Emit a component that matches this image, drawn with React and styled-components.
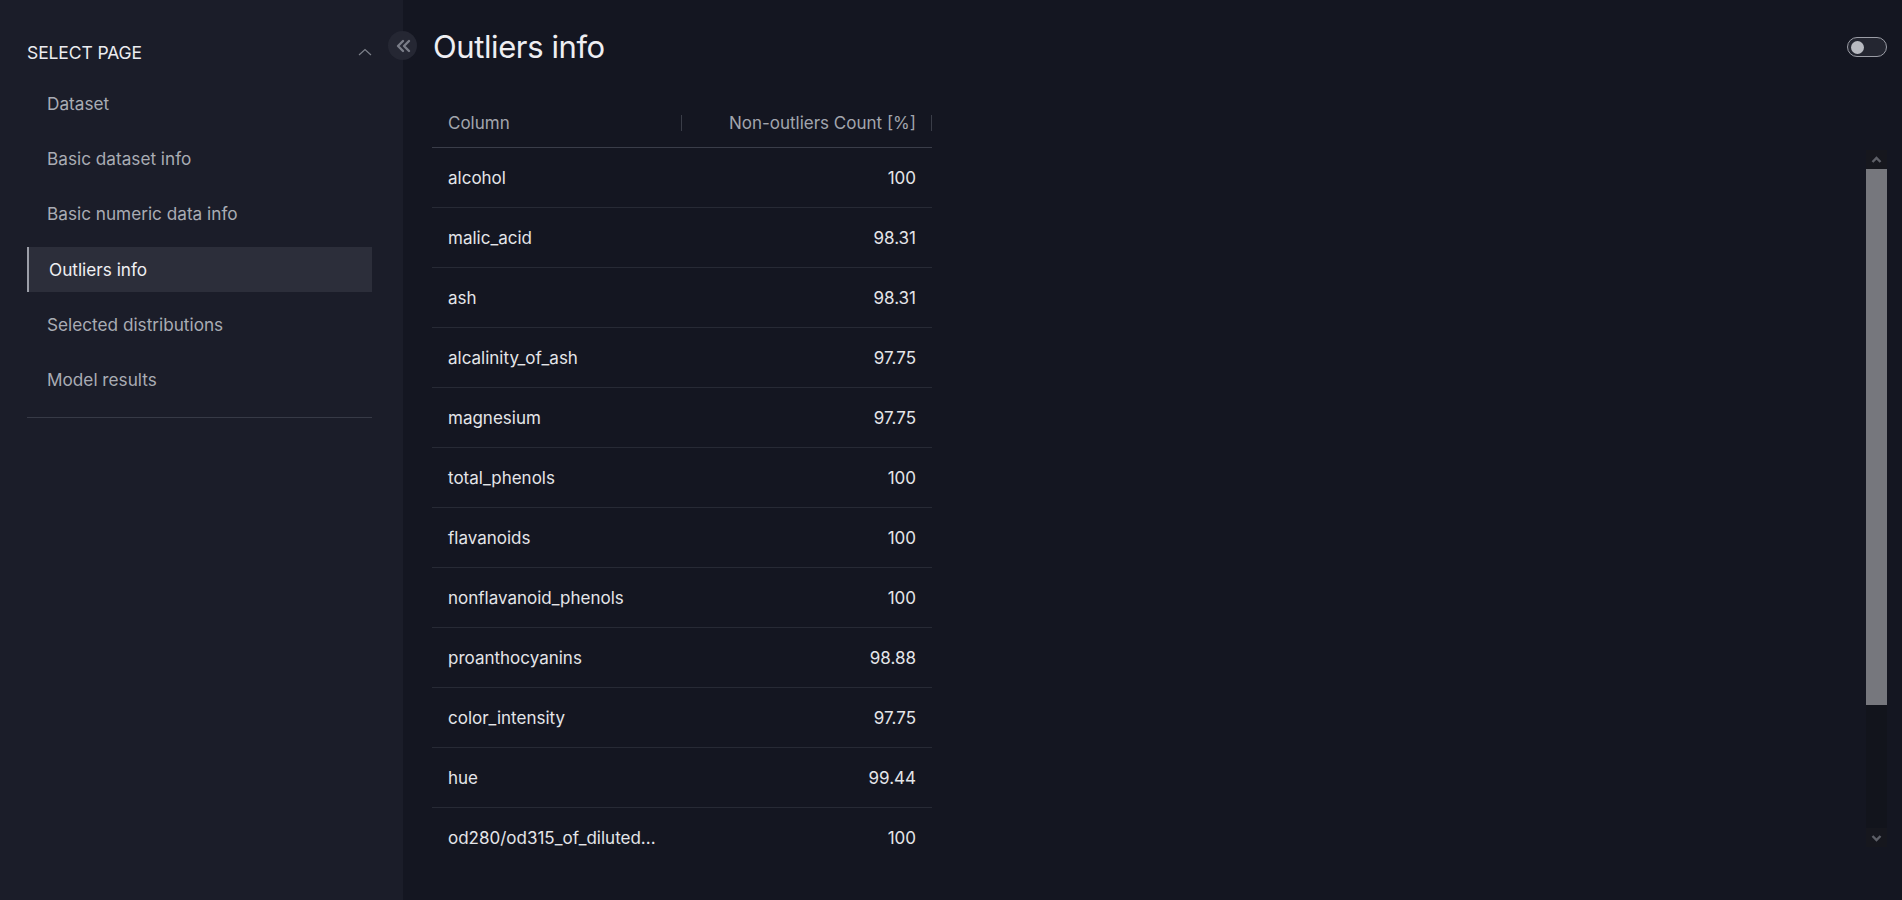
import React from 'react'
import styled, { createGlobalStyle } from 'styled-components';

const GlobalStyle = createGlobalStyle`
  body {
    margin: 0;
    background: #141621;
    font-family: Inter, "Noto Sans", "Liberation Sans", sans-serif;
  }
`;

const Page = styled.div`
  display: flex;
  height: 100vh;
  overflow: hidden;
`;

const Sidebar = styled.aside`
  position: relative;
  width: 403px;
  flex-shrink: 0;
  box-sizing: border-box;
  padding: 40px 31px 0 27px;
  background: #1b1d29;
`;

const SectionHeader = styled.div`
  display: flex;
  align-items: center;
  justify-content: space-between;
  height: 24px;
  color: #ececf0;
  font-size: 17.5px;
  letter-spacing: -0.1px;
`;

const NavList = styled.nav`
  display: flex;
  flex-direction: column;
  gap: 10.2px;
  margin-top: 17px;
  padding-bottom: 15px;
  border-bottom: 1px solid #373a46;
`;

const NavItem = styled.div`
  display: flex;
  align-items: center;
  height: 45px;
  padding-left: 20px;
  border-left: 2px solid ${({ $active }) => ($active ? '#9c9ea8' : 'transparent')};
  margin-left: ${({ $active }) => ($active ? '0' : '-2px')};
  background: ${({ $active }) => ($active ? '#2c2e3a' : 'transparent')};
  color: ${({ $active }) => ($active ? '#f0f0f3' : '#a9acb4')};
  font-size: 17.2px;
  cursor: pointer;
`;

const CollapseButton = styled.div`
  position: absolute;
  top: 31px;
  right: -14px;
  width: 29px;
  height: 29px;
  border-radius: 50%;
  background: #252733;
  display: flex;
  align-items: center;
  justify-content: center;
  z-index: 2;
`;

const Main = styled.main`
  flex: 1;
  display: flex;
  padding: 0 15px 0 30px;
`;

const Content = styled.div`
  flex: 1;
`;

const Title = styled.h1`
  margin: 26px 0 0;
  font-size: 31px;
  line-height: 42px;
  font-weight: 400;
  color: #eeeef2;
  letter-spacing: -0.4px;
`;

const Table = styled.div`
  width: 500px;
  margin-top: 32px;
  margin-left: -1px;
`;

const Row = styled.div`
  display: grid;
  grid-template-columns: 250px 250px;
  box-sizing: border-box;
  height: ${({ $header }) => ($header ? '48px' : '60px')};
  padding-bottom: ${({ $header }) => ($header ? '2px' : '0')};
  border-bottom: 1px solid ${({ $header }) => ($header ? '#3a3d49' : '#272a35')};

  &:last-child {
    border-bottom-color: transparent;
  }
`;

const Cell = styled.div`
  position: relative;
  display: flex;
  align-items: center;
  justify-content: ${({ $right }) => ($right ? 'flex-end' : 'flex-start')};
  padding: 0 16px;
  font-size: 17px;
  color: ${({ $header }) => ($header ? '#a2a5ad' : '#e4e5e9')};
  min-width: 0;
`;

const CellText = styled.span`
  white-space: nowrap;
`;

const HeaderDivider = styled.span`
  position: absolute;
  right: 0;
  top: 15px;
  width: 1px;
  height: 16px;
  background: #3a3d48;
`;

const RightRail = styled.div`
  width: 40px;
  display: flex;
  flex-direction: column;
  align-items: flex-end;
`;

const Toggle = styled.div`
  margin-top: 37px;
  width: 40px;
  height: 20px;
  box-sizing: border-box;
  border: 1.5px solid #9b9da6;
  border-radius: 10px;
  background: #242631;
  display: flex;
  align-items: center;
  padding-left: 3px;
`;

const Knob = styled.div`
  width: 13px;
  height: 13px;
  border-radius: 50%;
  background: #b8bac1;
`;

const ScrollTrack = styled.div`
  margin-top: 93px;
  width: 21px;
  height: 697px;
  background: #12141c;
  display: flex;
  flex-direction: column;
  align-items: center;
`;

const ScrollArrow = styled.div`
  height: 19px;
  width: 21px;
  display: flex;
  align-items: center;
  justify-content: center;
  background: #16171e;
`;

const ScrollThumb = styled.div`
  width: 21px;
  height: 536px;
  background: #76777d;
`;

const ScrollFill = styled.div`
  flex: 1;
`;

const pages = [
  'Dataset',
  'Basic dataset info',
  'Basic numeric data info',
  'Outliers info',
  'Selected distributions',
  'Model results',
];

// last column name is shown truncated, as the grid does
const rows = [
  ['alcohol', '100'],
  ['malic_acid', '98.31'],
  ['ash', '98.31'],
  ['alcalinity_of_ash', '97.75'],
  ['magnesium', '97.75'],
  ['total_phenols', '100'],
  ['flavanoids', '100'],
  ['nonflavanoid_phenols', '100'],
  ['proanthocyanins', '98.88'],
  ['color_intensity', '97.75'],
  ['hue', '99.44'],
  ['od280/od315_of_diluted...', '100'],
];

const ChevronUp = () => (
  <svg width="14" height="8" viewBox="0 0 14 8">
    <polyline points="1,7 7,1.5 13,7" fill="none" stroke="#7d808a" strokeWidth="1.2" />
  </svg>
);

const DoubleChevron = () => (
  <svg width="16" height="14" viewBox="0 0 16 14">
    <polyline points="8,2 3,7 8,12" fill="none" stroke="#7a7d88" strokeWidth="2.4" strokeLinecap="round" strokeLinejoin="round" />
    <polyline points="14,2 9,7 14,12" fill="none" stroke="#7a7d88" strokeWidth="2.4" strokeLinecap="round" strokeLinejoin="round" />
  </svg>
);

const SmallArrow = ({ down }) => (
  <svg width="11" height="8" viewBox="0 0 11 8">
    <polyline
      points={down ? '1.5,2 5.5,6 9.5,2' : '1.5,6 5.5,2 9.5,6'}
      fill="none"
      stroke="#5e6068"
      strokeWidth="2.4"
    />
  </svg>
);

const App = () => {
  return (
    <>
      <GlobalStyle />
      <Page>
        <Sidebar>
          <SectionHeader>
            <span>SELECT PAGE</span>
            <ChevronUp />
          </SectionHeader>
          <NavList>
            {pages.map((p) => (
              <NavItem key={p} $active={p === 'Outliers info'}>{p}</NavItem>
            ))}
          </NavList>
          <CollapseButton>
            <DoubleChevron />
          </CollapseButton>
        </Sidebar>
        <Main>
          <Content>
            <Title>Outliers info</Title>
            <Table>
              <Row $header>
                <Cell $header>
                  <CellText>Column</CellText>
                  <HeaderDivider />
                </Cell>
                <Cell $header $right>
                  <CellText>Non-outliers Count [%]</CellText>
                  <HeaderDivider />
                </Cell>
              </Row>
              {rows.map(([name, value]) => (
                <Row key={name}>
                  <Cell><CellText>{name}</CellText></Cell>
                  <Cell $right><CellText>{value}</CellText></Cell>
                </Row>
              ))}
            </Table>
          </Content>
          <RightRail>
            <Toggle>
              <Knob />
            </Toggle>
            <ScrollTrack>
              <ScrollArrow><SmallArrow /></ScrollArrow>
              <ScrollThumb />
              <ScrollFill />
              <ScrollArrow><SmallArrow down /></ScrollArrow>
            </ScrollTrack>
          </RightRail>
        </Main>
      </Page>
    </>
  )
}

export default App
